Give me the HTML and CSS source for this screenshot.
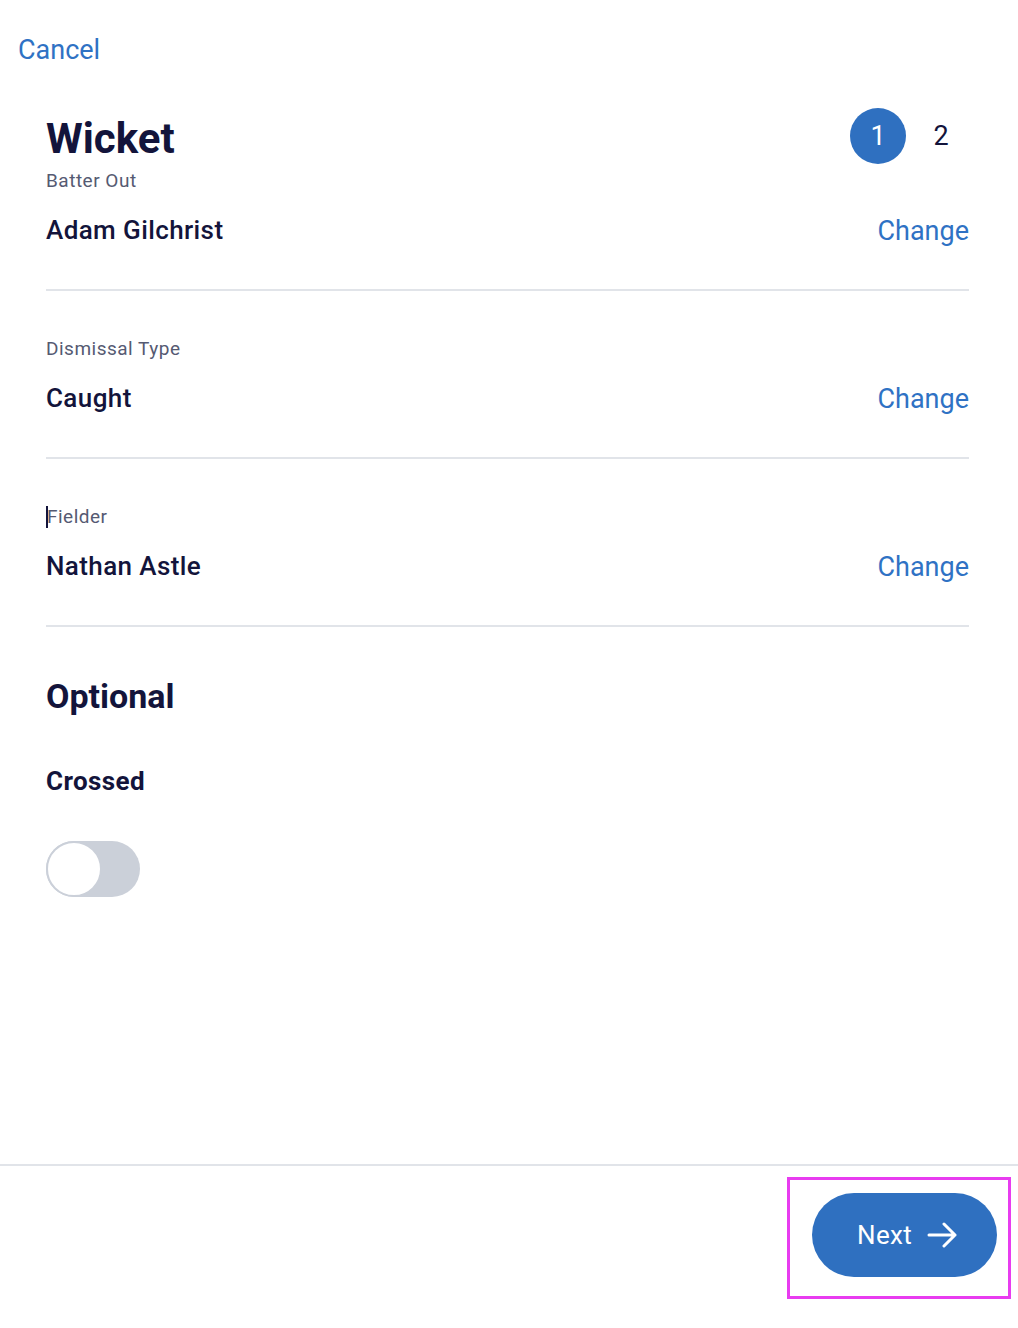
FILE: index.html
```html
<!DOCTYPE html>
<html lang="en">
<head>
<meta charset="utf-8">
<title>Wicket</title>
<link rel="stylesheet" href="styles.css">
</head>
<body>
<div class="page">
  <main class="main">
    <div class="topbar"><a class="cancel" href="#">Cancel</a></div>
    <div class="content">
      <header class="header">
        <h1 class="title">Wicket</h1>
        <div class="steps">
          <span class="step step-active">1</span>
          <span class="step">2</span>
        </div>
      </header>
      <section class="field field-first">
        <div class="label">Batter Out</div>
        <div class="row">
          <span class="value">Adam Gilchrist</span>
          <a class="change" href="#">Change</a>
        </div>
      </section>
      <section class="field">
        <div class="label">Dismissal Type</div>
        <div class="row">
          <span class="value">Caught</span>
          <a class="change" href="#">Change</a>
        </div>
      </section>
      <section class="field">
        <div class="label"><span class="caret"></span>Fielder</div>
        <div class="row">
          <span class="value">Nathan Astle</span>
          <a class="change" href="#">Change</a>
        </div>
      </section>
      <h2 class="optional">Optional</h2>
      <div class="option-label">Crossed</div>
      <div class="toggle"><span class="knob"></span></div>
    </div>
  </main>
  <footer class="footer">
    <div class="btn-wrap">
      <button class="next" type="button">Next
        <svg class="arrow" width="30" height="26" viewBox="0 0 30 26" fill="none" stroke="#fff" stroke-width="3" stroke-linecap="round" stroke-linejoin="round"><path d="M2 13h26M17 2l11 11-11 11"/></svg>
      </button>
      <span class="highlight"></span>
    </div>
  </footer>
</div>
</body>
</html>
```
FILE: styles.css
```css
* { box-sizing: border-box; }
html, body { margin: 0; padding: 0; background: #fff; }
body {
  font-family: Roboto, "Liberation Sans", sans-serif;
  color: #13143b;
}
.page {
  min-height: 1328px;
  display: flex;
  flex-direction: column;
}
.main { flex: 1; }
.topbar { padding: 35px 18px 0; height: 110px; }
.cancel {
  font-size: 27px;
  line-height: 31px;
  color: #2f72c4;
  text-decoration: none;
}
.content { padding: 0 49px 0 46px; }
.header {
  display: flex;
  justify-content: space-between;
  align-items: center;
  height: 56px;
  margin-top: -2px;
}
.title {
  margin: 0;
  font-size: 42px;
  font-weight: 700;
  line-height: 56px;
  color: #13143b;
  position: relative;
  top: 3px;
}
.steps { display: flex; gap: 7px; }
.step {
  width: 56px;
  height: 56px;
  border-radius: 50%;
  display: flex;
  align-items: center;
  justify-content: center;
  font-size: 27px;
  color: #13143b;
}
.step-active { background: #2f70c0; color: #fff; }
.field {
  padding: 47px 0 44px;
  border-bottom: 2px solid #e1e4e9;
}
.field-first { padding-top: 6px; }
.label {
  font-size: 19px;
  line-height: 22px;
  height: 22px;
  color: #555a72;
  margin-bottom: 21px;
  letter-spacing: 0.5px;
  display: flex;
  align-items: center;
}
.caret {
  display: inline-block;
  width: 2px;
  height: 22px;
  background: #13143b;
  margin-right: -1px;
}
.row {
  display: flex;
  justify-content: space-between;
  align-items: center;
  height: 32px;
}
.value {
  font-size: 26px;
  font-weight: 500;
  line-height: 32px;
  letter-spacing: 0.4px;
  color: #13143b;
  position: relative;
  top: 1px;
}
.change {
  font-size: 27px;
  line-height: 32px;
  color: #2f72c4;
  text-decoration: none;
  position: relative;
  top: 2px;
}
.optional {
  margin: 49px 0 0;
  font-size: 34px;
  line-height: 40px;
  font-weight: 700;
}
.option-label {
  margin-top: 49px;
  font-size: 26px;
  line-height: 32px;
  font-weight: 700;
  letter-spacing: 0.4px;
}
.toggle {
  margin-top: 44px;
  width: 94px;
  height: 56px;
  border-radius: 28px;
  background: #cbd0d9;
  display: flex;
  align-items: center;
}
.knob {
  width: 56px;
  height: 56px;
  border-radius: 50%;
  background: #fff;
  border: 2px solid #cbd0d9;
}
.footer {
  border-top: 2px solid #e1e4e9;
  height: 164px;
  display: flex;
  justify-content: flex-end;
  align-items: flex-start;
  padding: 27px 21px 0 0;
}
.btn-wrap { position: relative; }
.next {
  display: flex;
  align-items: center;
  gap: 15px;
  height: 84px;
  padding: 0 40px 0 45px;
  border: none;
  border-radius: 42px;
  background: #2f70c0;
  color: #fff;
  font-family: Roboto, "Liberation Sans", sans-serif;
  font-size: 26px;
  font-weight: 400;
  letter-spacing: 0.3px;
}
.arrow { display: block; }
.highlight {
  position: absolute;
  left: -25px;
  top: -16px;
  right: -14px;
  height: 122px;
  border: 3px solid #e83cf0;
  pointer-events: none;
}
```
